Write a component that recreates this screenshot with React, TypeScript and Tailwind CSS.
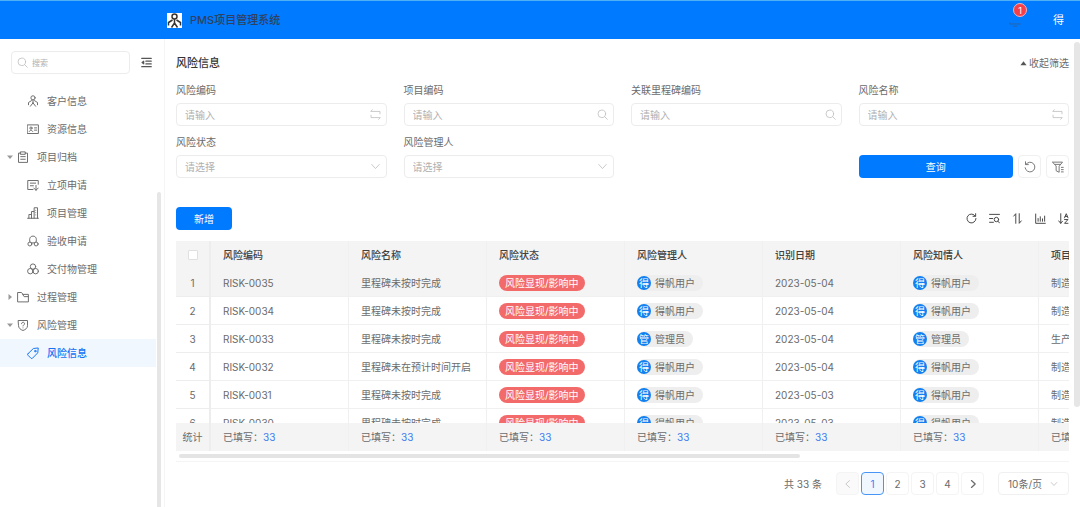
import type { ReactNode } from "react";
import clsx from "clsx";

function Icon({ className = "size-3", width = 1.2, children }: { className?: string; width?: number; children: ReactNode }) {
  return (
    <svg
      viewBox="0 0 16 16"
      fill="none"
      stroke="currentColor"
      strokeWidth={width}
      strokeLinecap="round"
      strokeLinejoin="round"
      aria-hidden="true"
      className={clsx("shrink-0", className)}
    >
      {children}
    </svg>
  );
}

const icons: Record<string, ReactNode> = {
  customer: (
    <>
      <circle cx="8" cy="3.800" r="2.800" />
      <path d="M8 6.600v4M8 10.500l-3.500 4.500M8 10.500l3.500 4.500M6 7.500 2 10v3M10 7.500l4 2.500v3" />
    </>
  ),
  resource: (
    <>
      <rect x="0.800" y="2.500" width="14.400" height="11.500" />
      <circle cx="5.300" cy="6.800" r="1.500" />
      <path d="M3 11.300c.4-2.200 4.200-2.200 4.600 0M10 6.500h2.800M10 9.500h2.800" />
    </>
  ),
  archive: (
    <>
      <path d="M5 2.800H2v12.400h12V2.800H11" />
      <path d="M5 1.200h6v3.200H5zM5 7.500h6M5 11h6" />
    </>
  ),
  apply: (
    <>
      <path d="M15 7V2H1v12h7M4.500 5.500h7M4.500 9h4" />
      <path d="M12 8.500v6.500M9 12l3 3 3-3" />
    </>
  ),
  building: (
    <path d="M0.800 15h14.400M2.500 15V10H6v5M6 10V6h3.500v9M9.500 6V1h4.500v14M11.700 4.500v0M11.700 7.500v0M11.700 10.500v0" />
  ),
  accept: (
    <>
      <path d="M4 9.500C2.500 4.500 4.300 1.500 8 1.500s5.500 3 4 8" />
      <circle cx="3.800" cy="12" r="2.600" />
      <circle cx="12.200" cy="12" r="2.600" />
      <path d="M6 10.500h4" />
    </>
  ),
  deliver: (
    <>
      <circle cx="8" cy="4.800" r="3.600" />
      <circle cx="4.400" cy="10.900" r="3.600" />
      <circle cx="11.600" cy="10.900" r="3.600" />
    </>
  ),
  folder: <path d="M0.800 14V2h5.200l2 2.500h7.200V14zM7.500 4.500l2 3H15" />,
  shield: (
    <>
      <path d="M2 2h12v7c0 3.200-2.700 5.200-6 6.300-3.300-1.100-6-3.100-6-6.300z" />
      <path d="M6 6.300c0-2.700 4-2.700 4 0C10 8 8 8 8 9.300M8 11.800v0" />
    </>
  ),
  tag: (
    <>
      <path d="M1.300 9 8.500 2l6.500-.7-.7 6.500L7.300 15c-.7.600-1.300.6-2 0l-4-4c-.6-.7-.6-1.300 0-2z" />
      <circle cx="11" cy="5.500" r="1" />
    </>
  ),
};

const menu = [
  { label: "客户信息", icon: "customer", level: 2 },
  { label: "资源信息", icon: "resource", level: 2 },
  { label: "项目归档", icon: "archive", level: 1, open: true },
  { label: "立项申请", icon: "apply", level: 2 },
  { label: "项目管理", icon: "building", level: 2 },
  { label: "验收申请", icon: "accept", level: 2 },
  { label: "交付物管理", icon: "deliver", level: 2 },
  { label: "过程管理", icon: "folder", level: 1, open: false },
  { label: "风险管理", icon: "shield", level: 1, open: true },
  { label: "风险信息", icon: "tag", level: 2, active: true },
];

const SearchGlyph = (
  <>
    <circle cx="7" cy="7" r="5.500" />
    <path d="m11 11 4 4" />
  </>
);
const Chevron = <path d="m2.500 5 5.500 6 5.500-6" />;
const Swap = <path d="M3.500 1 1 3.500h13.500V7M12.500 15l2.500-2.500H1.500V9" />;

const filters = [
  { id: "code", label: "风险编码", icon: Swap },
  { id: "project", label: "项目编码", icon: SearchGlyph },
  { id: "milestone", label: "关联里程碑编码", icon: SearchGlyph },
  { id: "name", label: "风险名称", icon: Swap },
  { id: "status", label: "风险状态", select: true },
  { id: "manager", label: "风险管理人", select: true },
];

const columns = ["风险编码", "风险名称", "风险状态", "风险管理人", "识别日期", "风险知情人", "项目"];

const rows = [
  { code: "RISK-0035", name: "里程碑未按时完成", user: "得帆用户", date: "2023-05-04", project: "制造" },
  { code: "RISK-0034", name: "里程碑未按时完成", user: "得帆用户", date: "2023-05-04", project: "制造" },
  { code: "RISK-0033", name: "里程碑未按时完成", user: "管理员", date: "2023-05-04", project: "生产" },
  { code: "RISK-0032", name: "里程碑未在预计时间开启", user: "得帆用户", date: "2023-05-04", project: "制造" },
  { code: "RISK-0031", name: "里程碑未按时完成", user: "得帆用户", date: "2023-05-03", project: "制造" },
  { code: "RISK-0030", name: "里程碑未按时完成", user: "得帆用户", date: "2023-05-03", project: "制造" },
];

const tools = [
  { label: "刷新", icon: <path d="M13.500 4.500A6.500 6.500 0 1 0 14.500 8M14 1v3.800h-3.800" /> },
  {
    label: "查找",
    icon: (
      <>
        <path d="M0.800 2h14.400M0.800 8h4.700M0.800 13.500h5.700" />
        <circle cx="10.800" cy="9.500" r="3.200" />
        <path d="m13 12 2.300 2.500" />
      </>
    ),
  },
  { label: "排序", icon: <path d="M5.500 15V1L2.500 4.500M10.500 1v14l3-3.500" /> },
  { label: "图表", icon: <path d="M1 1.500V15h14M4.500 12V8M7.700 12V5.500M10.900 12V8.500M14 12V4.500" /> },
  { label: "字母排序", icon: <path d="M4 1v14L1 11.500M4 15l2.500-3M9.500 7 12 1l2.500 6M10.500 5h3M9.500 9.500h5l-5 5.500h5" /> },
];

function UserTag({ name }: { name: string }) {
  return (
    <span className="inline-flex h-4 items-center gap-1 rounded-full bg-[#eeeeee] pr-2 align-middle">
      <span className="flex size-[14px] items-center justify-center rounded-full bg-[#1280f0] text-white">{name[0]}</span>
      {name}
    </span>
  );
}

function Header() {
  return (
    <header className="flex h-[39px] items-center border-t border-[#4fb0f5] bg-[#007aff] pr-4 pl-[167px]">
      <svg viewBox="0 0 15 15" className="mr-2 size-[15px] bg-white" fill="none" stroke="#3a3530" strokeWidth="1.500" aria-hidden="true">
        <circle cx="7.500" cy="3.500" r="2.500" />
        <path d="M7.500 6v5M7.500 10l-3 4.500M7.500 10l3 4.500M5.500 7 1.500 9.500v3M9.500 7l4 2.500v3" />
      </svg>
      <h1 className="flex-1 text-[11px] font-medium text-[#30415c]">PMS项目管理系统</h1>
      <button aria-label="通知" className="relative mr-[31px] text-[#2c62a0]">
        <Icon className="size-[14px]" width={1}>
          <path d="M2 11v1.500h12M6 15h4" />
        </Icon>
        <span className="absolute -top-[10px] left-[5px] flex size-[14px] items-center justify-center rounded-full border border-[#f5b0b8] bg-[#f5404a] text-[9px] leading-none text-white">
          1
        </span>
      </button>
      <button className="text-[11px] text-white">得</button>
    </header>
  );
}

function Sidebar() {
  return (
    <aside className="relative w-[165px] shrink-0 border-r border-[#f5f5f5]">
      <div className="flex items-center gap-[11px] px-[11px] pt-3">
        <label className="flex h-[23px] w-[119px] items-center gap-1 rounded-sm border border-[#ececec] px-[5px] text-[#c0c0c0]">
          <Icon className="size-[11px]">{SearchGlyph}</Icon>
          <input aria-label="搜索" placeholder="搜索" className="w-full min-w-0 text-[8px] outline-none placeholder:text-[#b0b0b0]" />
        </label>
        <button aria-label="收起菜单" className="text-[#555]">
          <Icon className="size-[11px]" width={1.500}>
            <path d="M1 2h14M7 6h8M7 10h8M1 14h14" />
            <path d="M4 6 1.500 8 4 10z" fill="currentColor" />
          </Icon>
        </button>
      </div>
      <nav className="mt-[13px] pr-2">
        {menu.map((m) => (
          <a
            key={m.label + m.icon}
            href="#"
            className={clsx(
              "flex h-7 items-center",
              m.level === 2 ? "gap-2 pl-[27px]" : "gap-[3px] pl-[6px]",
              m.active ? "bg-[#f0f7ff] font-medium text-[#1473f5]" : "text-[#6b6b6b]"
            )}
          >
            {m.level === 1 && (
              <svg viewBox="0 0 8 8" className={clsx("size-2 fill-[#999]", !m.open && "-rotate-90")} aria-hidden="true">
                <path d="M1 2.500h6L4 6z" />
              </svg>
            )}
            <Icon className="size-3" width={1.300}>{icons[m.icon]}</Icon>
            <span className={clsx(m.level === 1 && "pl-[5px]")}>{m.label}</span>
          </a>
        ))}
      </nav>
      <div className="absolute top-[153px] right-[3px] bottom-0 w-1 rounded-t-full bg-[#e6e6e6]" />
    </aside>
  );
}

function Filters() {
  return (
    <form className="grid grid-cols-4 gap-x-[17px] gap-y-2">
      {filters.map((f) => (
        <div key={f.id}>
          <label htmlFor={f.id} className="mb-[5px] block h-4 leading-4">{f.label}</label>
          <div className="flex h-[23px] items-center rounded-sm border border-[#ececec] pr-[5px] text-[#c0c0c0]">
            {f.select ? (
              <select id={f.id} className="w-full min-w-0 appearance-none pl-2 text-[#b0b0b0] outline-none">
                <option>请选择</option>
              </select>
            ) : (
              <input id={f.id} placeholder="请输入" className="w-full min-w-0 pl-2 outline-none placeholder:text-[#b0b0b0]" />
            )}
            <Icon className="size-[11px]">{f.select ? Chevron : f.icon}</Icon>
          </div>
        </div>
      ))}
      <div className="col-start-4 flex items-end gap-[5px]">
        <button type="button" className="h-[23px] flex-1 rounded-sm bg-[#007aff] text-white">查询</button>
        <button type="button" aria-label="重置" className="flex size-[23px] items-center justify-center rounded-sm border border-[#f0f0f0]">
          <Icon>
            <path d="M2.500 4.500A6.500 6.500 0 1 1 1.500 9M2 1v3.800h3.800" />
          </Icon>
        </button>
        <button type="button" aria-label="筛选设置" className="flex size-[23px] items-center justify-center rounded-sm border border-[#f0f0f0]">
          <Icon>
            <path d="M1 1.500h13L9.500 7v8L5.500 13V7zM4 4.500h7M12.500 8.500H15M12.500 11.500H15M12.500 14.500H15" />
          </Icon>
        </button>
      </div>
    </form>
  );
}

function RiskTable() {
  const cell = "border-r border-[#f0f0f0] pl-3 text-left whitespace-nowrap";
  const first = "border-r-2 border-[#ededed] text-center";
  return (
    <div className="mt-[11px] border-b border-[#f4f4f4]">
      <div className="max-h-[210px] overflow-hidden">
        <table className="w-[1001px] table-fixed border-separate border-spacing-0">
          <colgroup>
            <col className="w-[35px]" />
            {columns.map((c) => (
              <col key={c} className="w-[138px]" />
            ))}
          </colgroup>
          <thead>
            <tr className="h-7 bg-[#f4f4f4] text-[#404040]">
              <th className={first}>
                <input
                  type="checkbox"
                  aria-label="全选"
                  className="mx-auto block size-[10px] appearance-none rounded-[1px] border border-[#e0e0e0] bg-white"
                />
              </th>
              {columns.map((c) => (
                <th key={c} className={clsx(cell, "font-medium")}>{c}</th>
              ))}
            </tr>
          </thead>
          <tbody>
            {rows.map((r, i) => (
              <tr key={r.code} className={clsx("h-7 *:border-b", i === 0 && "bg-[#f4f4f4]")}>
                <td className={first}>{i + 1}</td>
                <td className={cell}>{r.code}</td>
                <td className={cell}>{r.name}</td>
                <td className={cell}>
                  <span className="inline-flex h-4 items-center rounded-full bg-[#f26a6a] px-[6px] align-middle text-white">
                    风险显现/影响中
                  </span>
                </td>
                <td className={cell}><UserTag name={r.user} /></td>
                <td className={cell}>{r.date}</td>
                <td className={cell}><UserTag name={r.user} /></td>
                <td className={cell}>{r.project}</td>
              </tr>
            ))}
          </tbody>
          <tfoot className="sticky bottom-0">
            <tr className="h-7 bg-[#f4f4f4]">
              <td className={first}>统计</td>
              {columns.map((c) => (
                <td key={c} className={cell}>
                  已填写：<span className="text-[#3d7cf5]">33</span>
                </td>
              ))}
            </tr>
          </tfoot>
        </table>
      </div>
      <div className="px-[3px] py-[3px]">
        <div className="h-1 w-[70%] rounded-full bg-[#e4e4e4]" />
      </div>
    </div>
  );
}

function Pagination() {
  const box = "flex size-[23px] items-center justify-center rounded-sm border";
  return (
    <div className="mt-[10px] flex items-center justify-end">
      <span className="mr-[14px]">共 33 条</span>
      <div className="flex gap-[2px]">
        <button aria-label="上一页" disabled className={clsx(box, "border-[#f4f4f4] bg-[#fafafa] text-[#bbb]")}>
          <Icon className="size-[10px]"><path d="m10.500 2.500-6 5.500 6 5.500" /></Icon>
        </button>
        {[1, 2, 3, 4].map((p) => (
          <button key={p} className={clsx(box, p === 1 ? "border-[#4796f7] bg-[#f0f7ff] text-[#3d7cf5]" : "border-[#f4f4f4]")}>
            {p}
          </button>
        ))}
        <button aria-label="下一页" className={clsx(box, "border-[#f4f4f4]")}>
          <Icon className="size-[10px]" width={2}><path d="m5.500 2.500 6 5.500-6 5.500" /></Icon>
        </button>
      </div>
      <label className="ml-[14px] flex h-[23px] w-[71px] items-center rounded-sm border border-[#f0f0f0] pr-[10px] text-[#aaa]">
        <select aria-label="每页条数" className="w-full appearance-none pl-[9px] text-[#6b6b6b] outline-none">
          <option>10条/页</option>
        </select>
        <Icon className="size-2">{Chevron}</Icon>
      </label>
    </div>
  );
}

export default function App() {
  return (
    <div className="flex min-h-screen flex-col bg-white font-[Inter,'Noto_Sans_CJK_SC',sans-serif] text-[10px] leading-4 text-[#6b6b6b]">
      <Header />
      <div className="flex flex-1">
        <Sidebar />
        <main className="relative min-w-0 flex-1 px-[11px] pt-[15px] pb-[11px]">
          <div className="mb-[10px] flex h-[18px] items-center justify-between">
            <h2 className="text-[11px] font-medium text-[#333]">风险信息</h2>
            <button className="flex items-center gap-[2px]">
              <svg viewBox="0 0 8 8" className="size-[7px] fill-[#555]" aria-hidden="true">
                <path d="M0.500 6h7L4 1.500z" />
              </svg>
              收起筛选
            </button>
          </div>
          <Filters />
          <div className="mt-[29px] flex items-center justify-between">
            <button className="h-[23px] w-14 rounded-sm bg-[#007aff] text-white">新增</button>
            <div className="flex gap-3 text-[#444]">
              {tools.map((t) => (
                <button key={t.label} aria-label={t.label}>
                  <Icon className="size-[11px]" width={1.400}>{t.icon}</Icon>
                </button>
              ))}
            </div>
          </div>
          <RiskTable />
          <Pagination />
          <div className="absolute top-[3px] right-0 h-[365px] w-[6px] rounded-full bg-[#e6e6e6]" />
        </main>
      </div>
    </div>
  );
}
